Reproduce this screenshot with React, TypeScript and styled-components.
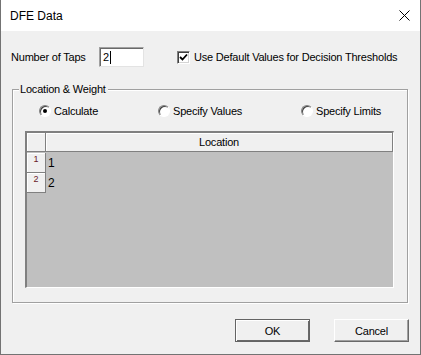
import React from 'react'
import styled, { createGlobalStyle, css } from 'styled-components'

const GlobalStyle = createGlobalStyle`
  html, body {
    margin: 0;
    padding: 0;
    background: #f0f0f0;
  }
  * {
    box-sizing: border-box;
  }
`

const Window = styled.div`
  width: 421px;
  height: 355px;
  display: flex;
  flex-direction: column;
  background: #f0f0f0;
  border: 1px solid #737373;
  border-top: none;
  font-family: 'Liberation Sans', Arial, sans-serif;
  font-size: 11px;
  letter-spacing: -0.2px;
  color: #000;
`

const TitleBar = styled.div`
  height: 31px;
  flex: none;
  background: #fff;
  display: flex;
  align-items: center;
  justify-content: space-between;
  padding: 0 10px 0 9px;
`

const Title = styled.span`
  font-size: 12px;
  letter-spacing: 0;
  padding-top: 1px;
`

const CloseButton = styled.button`
  width: 12px;
  height: 12px;
  padding: 0;
  border: none;
  background: transparent;
  display: flex;
  align-items: center;
  justify-content: center;
`

const Body = styled.div`
  flex: 1;
  display: flex;
  flex-direction: column;
  padding: 16px 12px 0 11px;
`

const TopRow = styled.div`
  display: flex;
  align-items: center;
  height: 20px;
`

const FieldLabel = styled.label`
  width: 88px;
  margin-left: -1px;
`

const TextBox = styled.div`
  width: 45px;
  height: 20px;
  background: #fff;
  border-top: 1px solid #a0a0a0;
  border-left: 1px solid #a0a0a0;
  border-right: 1px solid #e3e3e3;
  border-bottom: 1px solid #e3e3e3;
  box-shadow: inset 1px 1px 0 #696969;
  display: flex;
  align-items: center;
  padding-left: 3px;
`

const Caret = styled.span`
  width: 1px;
  height: 13px;
  background: #000;
  margin-left: 1px;
`

const CheckLabel = styled.label`
  display: flex;
  align-items: center;
  gap: 4px;
  margin-left: 33px;
`

const CheckBox = styled.span`
  width: 13px;
  height: 13px;
  background: #fff;
  border-top: 1px solid #808080;
  border-left: 1px solid #808080;
  border-right: 1px solid #fff;
  border-bottom: 1px solid #fff;
  box-shadow: inset 1px 1px 0 #404040, inset -1px -1px 0 #d4d4d4;
  display: flex;
  align-items: center;
  justify-content: center;
`

const GroupBox = styled.div`
  position: relative;
  margin-top: 22px;
  width: 396px;
  height: 214px;
  border: 1px solid #a0a0a0;
  box-shadow: inset 1px 1px 0 #fff, 1px 1px 0 #fff;
  display: flex;
  flex-direction: column;
`

const Legend = styled.span`
  position: absolute;
  left: 6px;
  top: -7px;
  padding: 0 2px 0 1px;
  background: #f0f0f0;
  line-height: 13px;
`

const RadioRow = styled.div`
  display: flex;
  align-items: center;
  height: 14px;
  margin: 14px 0 0 26px;
`

const RadioOption = styled.label<{ $w?: number }>`
  display: flex;
  align-items: center;
  gap: 3px;
  ${({ $w }) =>
    $w &&
    css`
      width: ${$w}px;
    `}
`

const RadioCircle = styled.span<{ $on?: boolean }>`
  width: 12px;
  height: 12px;
  border-radius: 50%;
  background: #fff;
  border: 1px solid;
  border-color: #808080 #fff #fff #808080;
  box-shadow: inset 1px 1px 0 #404040;
  display: flex;
  align-items: center;
  justify-content: center;
  &::after {
    content: '';
    width: 4px;
    height: 4px;
    border-radius: 50%;
    background: ${({ $on }) => ($on ? '#000' : 'transparent')};
  }
`

const Grid = styled.div`
  margin: 13px 0 0 12px;
  width: 369px;
  height: 157px;
  background: #c0c0c0;
  border-top: 2px solid #808080;
  border-left: 2px solid #808080;
  border-right: 1px solid #fff;
  border-bottom: 1px solid #fff;
  display: grid;
  grid-template-columns: 19px 1fr;
  grid-auto-rows: 20px;
  align-content: start;
`

const HeaderCell = styled.div`
  background: #f0f0f0;
  border-right: 1px solid #808080;
  border-bottom: 1px solid #808080;
  box-shadow: inset 1px 1px 0 #fff;
  display: flex;
  align-items: center;
  justify-content: center;
  height: 19px;
  &:last-of-type {
    border-right-width: 2px;
  }
`

const RowHeader = styled.div`
  background: #f0f0f0;
  border-right: 1px solid #808080;
  border-bottom: 1px solid #808080;
  box-shadow: inset 1px 1px 0 #fff;
  font-size: 9px;
  letter-spacing: 0;
  color: #6a1b2a;
  text-align: center;
  padding-top: 2px;
  line-height: 9px;
`

const DataCell = styled.div`
  display: flex;
  align-items: center;
  padding-left: 2px;
  font-size: 12px;
`

const ButtonRow = styled.div`
  display: flex;
  justify-content: flex-end;
  gap: 24px;
  margin: 16px -1px 0 0;
`

const Button = styled.button<{ $default?: boolean }>`
  width: 75px;
  height: 23px;
  font-family: inherit;
  font-size: 11px;
  letter-spacing: inherit;
  color: #000;
  background: #f0f0f0;
  padding: 0;
  border-top: 1px solid #fff;
  border-left: 1px solid #fff;
  border-right: 1px solid #696969;
  border-bottom: 1px solid #696969;
  box-shadow: inset -1px -1px 0 #a0a0a0;
  ${({ $default }) =>
    $default &&
    css`
      border: 1px solid #646464;
      box-shadow: inset 1px 1px 0 #fff, inset -1px -1px 0 #696969;
    `}
`

const rows = ['1', '2']

export default function App() {
  return (
    <>
      <GlobalStyle />
      <Window>
        <TitleBar>
          <Title>DFE Data</Title>
          <CloseButton aria-label="Close">
            <svg width="11" height="11" viewBox="0 0 11 11">
              <path d="M0.5 0.5 L10.5 10.5 M10.5 0.5 L0.5 10.5" stroke="#000" strokeWidth="1" />
            </svg>
          </CloseButton>
        </TitleBar>
        <Body>
          <TopRow>
            <FieldLabel>Number of Taps</FieldLabel>
            <TextBox>
              2<Caret />
            </TextBox>
            <CheckLabel>
              <CheckBox>
                <svg width="9" height="9" viewBox="0 0 9 9">
                  <path d="M1 4 L3.5 6.5 L8 1.5" stroke="#000" strokeWidth="1.8" fill="none" />
                </svg>
              </CheckBox>
              Use Default Values for Decision Thresholds
            </CheckLabel>
          </TopRow>
          <GroupBox>
            <Legend>Location &amp; Weight</Legend>
            <RadioRow>
              <RadioOption $w={119}>
                <RadioCircle $on />
                Calculate
              </RadioOption>
              <RadioOption $w={143}>
                <RadioCircle />
                Specify Values
              </RadioOption>
              <RadioOption>
                <RadioCircle />
                Specify Limits
              </RadioOption>
            </RadioRow>
            <Grid>
              <HeaderCell />
              <HeaderCell>Location</HeaderCell>
              {rows.map((r) => (
                <React.Fragment key={r}>
                  <RowHeader>{r}</RowHeader>
                  <DataCell>{r}</DataCell>
                </React.Fragment>
              ))}
            </Grid>
          </GroupBox>
          <ButtonRow>
            <Button $default>OK</Button>
            <Button>Cancel</Button>
          </ButtonRow>
        </Body>
      </Window>
    </>
  )
}
